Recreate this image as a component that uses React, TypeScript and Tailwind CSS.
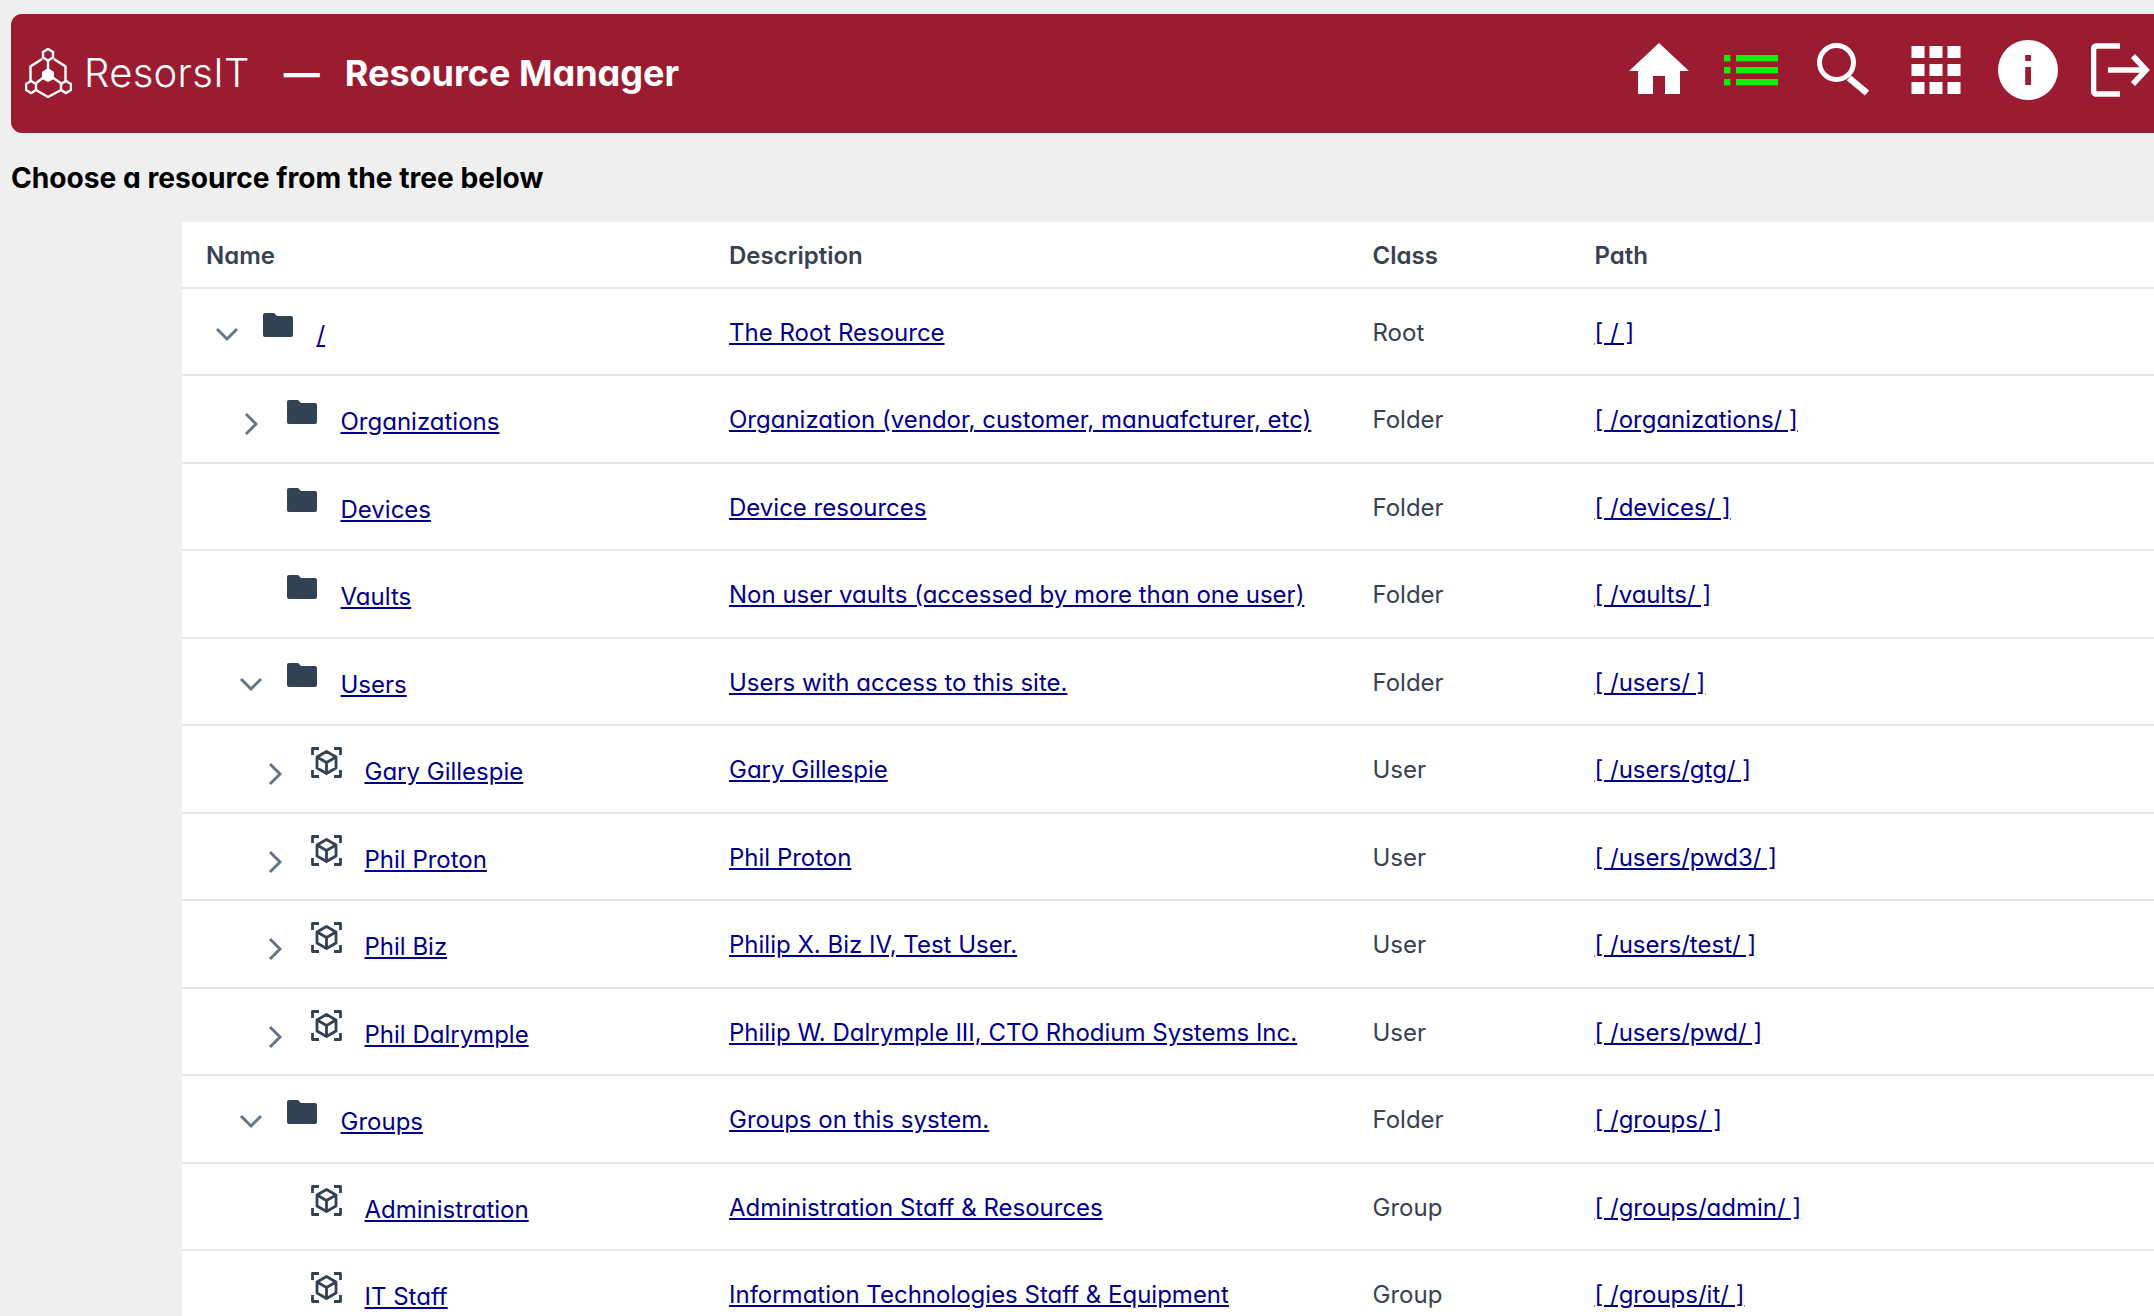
import React from "react";

type Row = {
  name: string;
  desc: string;
  cls: string;
  path: string;
  depth: 0 | 1 | 2;
  chevron: "down" | "right" | "none";
  icon: "folder" | "cube";
};

const rows: Row[] = [
  { name: "/", desc: "The Root Resource", cls: "Root", path: "[ / ]", depth: 0, chevron: "down", icon: "folder" },
  { name: "Organizations", desc: "Organization (vendor, customer, manuafcturer, etc)", cls: "Folder", path: "[ /organizations/ ]", depth: 1, chevron: "right", icon: "folder" },
  { name: "Devices", desc: "Device resources", cls: "Folder", path: "[ /devices/ ]", depth: 1, chevron: "none", icon: "folder" },
  { name: "Vaults", desc: "Non user vaults (accessed by more than one user)", cls: "Folder", path: "[ /vaults/ ]", depth: 1, chevron: "none", icon: "folder" },
  { name: "Users", desc: "Users with access to this site.", cls: "Folder", path: "[ /users/ ]", depth: 1, chevron: "down", icon: "folder" },
  { name: "Gary Gillespie", desc: "Gary Gillespie", cls: "User", path: "[ /users/gtg/ ]", depth: 2, chevron: "right", icon: "cube" },
  { name: "Phil Proton", desc: "Phil Proton", cls: "User", path: "[ /users/pwd3/ ]", depth: 2, chevron: "right", icon: "cube" },
  { name: "Phil Biz", desc: "Philip X. Biz IV, Test User.", cls: "User", path: "[ /users/test/ ]", depth: 2, chevron: "right", icon: "cube" },
  { name: "Phil Dalrymple", desc: "Philip W. Dalrymple III, CTO Rhodium Systems Inc.", cls: "User", path: "[ /users/pwd/ ]", depth: 2, chevron: "right", icon: "cube" },
  { name: "Groups", desc: "Groups on this system.", cls: "Folder", path: "[ /groups/ ]", depth: 1, chevron: "down", icon: "folder" },
  { name: "Administration", desc: "Administration Staff & Resources", cls: "Group", path: "[ /groups/admin/ ]", depth: 2, chevron: "none", icon: "cube" },
  { name: "IT Staff", desc: "Information Technologies Staff & Equipment", cls: "Group", path: "[ /groups/it/ ]", depth: 2, chevron: "none", icon: "cube" },
];

const depthClass = ["pl-[33px]", "pl-[57px]", "pl-[81px]"];

function Logo() {
  return (
    <svg width="47" height="50" viewBox="0 0 47 50" fill="none" stroke="#fff" strokeWidth="2.4" className="shrink-0">
      <path d="M23 1 L28 4 V9.5 L23 12.5 L18 9.5 V4 Z" />
      <path d="M6 33 L11 36 V42 L6 45 L1 42 V36 Z" />
      <path d="M41 33 L46 36 V42 L41 45 L36 42 V36 Z" />
      <path d="M23 20 L29 24 V31 L23 34 L17 31 V24 Z" fill="#fff" stroke="none" />
      <path d="M23 12.5 V22 M19 29 L10 36 M27 29 L37 36" />
      <path d="M17 11 L5.5 18.5 V33 M29 11 L40.5 18.5 V33 M11 42 L23 49 L36 42" />
    </svg>
  );
}

function HomeIcon() {
  return (
    <svg width="60" height="60" viewBox="0 0 60 60" fill="#fff">
      <path d="M30 3 L60 31 H51 V54 H36 V36 H24 V54 H9 V31 H0 Z" />
    </svg>
  );
}

function ListIcon() {
  return (
    <svg width="60" height="60" viewBox="0 0 60 60" fill="#0cf00c">
      <rect x="3" y="15" width="6.4" height="6.4" />
      <rect x="15" y="15" width="42" height="6.4" />
      <rect x="3" y="27" width="6.4" height="6.4" />
      <rect x="15" y="27" width="42" height="6.4" />
      <rect x="3" y="39" width="6.4" height="6.4" />
      <rect x="15" y="39" width="42" height="6.4" />
    </svg>
  );
}

function SearchIcon() {
  return (
    <svg width="60" height="60" viewBox="0 0 60 60" fill="none" stroke="#fff">
      <circle cx="22.5" cy="22.5" r="17" strokeWidth="5" />
      <path d="M35 38 L53 53" strokeWidth="6.5" />
    </svg>
  );
}

function GridIcon() {
  const pos = [0, 18, 36];
  return (
    <svg width="60" height="60" viewBox="0 0 60 60" fill="#fff">
      {pos.map((y) =>
        pos.map((x) => <rect key={`${x}-${y}`} x={x + 5.5} y={y + 6} width="13" height="12" />)
      )}
    </svg>
  );
}

function InfoIcon() {
  return (
    <svg width="60" height="60" viewBox="0 0 60 60" fill="#fff">
      <path
        fillRule="evenodd"
        d="M30 0 A30 30 0 1 1 30 60 A30 30 0 1 1 30 0 Z M27.2 15 V21 H33 V15 Z M27.2 27 V45 H33 V27 Z"
      />
    </svg>
  );
}

function LogoutIcon() {
  return (
    <svg width="60" height="60" viewBox="0 0 60 60" fill="none" stroke="#fff" strokeWidth="5.6">
      <path d="M29 6 H6 Q2.5 6 2.5 10 V50 Q2.5 54 6 54 H29" />
      <path d="M17 30 H55" />
      <path d="M42 16 L55 30 L42 44" />
    </svg>
  );
}

function Chevron({ dir }: { dir: "down" | "right" | "none" }) {
  if (dir === "none") return <span className="w-[24px] h-[24px] shrink-0" />;
  return (
    <svg
      width="24"
      height="24"
      viewBox="0 0 24 24"
      fill="none"
      stroke="#64748b"
      strokeWidth="2.9"
      className={dir === "down" ? "shrink-0 mt-[34px]" : "shrink-0 mt-[36px]"}
    >
      {dir === "down" ? <path d="M2 6 L12 16 L22 6" /> : <path d="M7 2 L17 12 L7 22" />}
    </svg>
  );
}

function FolderIcon() {
  return (
    <svg width="30" height="24" viewBox="0 0 30 24" fill="#334155" className="shrink-0 mt-[24px]">
      <path d="M2 0 H11 L14 3 H28 Q30 3 30 5 V22 Q30 24 28 24 H2 Q0 24 0 22 V2 Q0 0 2 0 Z" />
    </svg>
  );
}

function CubeIcon() {
  return (
    <svg
      width="31"
      height="31"
      viewBox="0 0 31 31"
      fill="none"
      stroke="#334155"
      strokeWidth="2.8"
      strokeLinejoin="round"
      className="shrink-0 mt-[21px]"
    >
      <path d="M1.5 8 V1.5 H8 M23 1.5 H29.5 V8 M29.5 23 V29.5 H23 M8 29.5 H1.5 V23" />
      <path d="M15.5 4.5 L25 10 V21 L15.5 26.5 L6 21 V10 Z" />
      <path d="M6 10 L15.5 15.5 L25 10 M15.5 15.5 V26.5" />
    </svg>
  );
}

const linkClass = "text-[#00008b] underline";

export default function App() {
  return (
    <div className="w-[2154px] h-[1316px] overflow-hidden bg-[#efefef] font-['Inter',sans-serif] [font-feature-settings:'cv11'] text-[24px]">
      <div className="h-[14px]" />
      <header className="ml-[11px] w-[2156px] h-[119px] rounded-[11px] bg-[#9b1c31] flex items-center text-white">
        <div className="flex items-center pl-[14px] pb-[2px]">
          <Logo />
          <span className="ml-[12px] text-[40px] font-light leading-none tracking-[0.3px]">ResorsIT</span>
          <span className="ml-[34px] text-[36px] font-bold leading-none">—</span>
          <span className="ml-[25px] text-[36px] font-bold leading-none">Resource Manager</span>
        </div>
        <div className="ml-auto flex items-center pb-[7px]">
          {[HomeIcon, ListIcon, SearchIcon, GridIcon, InfoIcon, LogoutIcon].map((Icon, i) => (
            <div key={i} className="w-[92.4px] flex justify-center">
              <Icon />
            </div>
          ))}
        </div>
      </header>
      <h1 className="ml-[11px] mt-[25px] text-[28.15px] leading-[40px] font-bold text-black">Choose a resource from the tree below</h1>
      <div className="ml-[182px] mt-[24px] w-[2100px] bg-white">
        <div className="flex h-[66.5px] items-center pt-[3px] font-semibold text-[#374151] border-b-2 border-[#e5e7eb]">
          <div className="w-[523px] pl-[24px] shrink-0">Name</div>
          <div className="w-[643.5px] pl-[24px] shrink-0">Description</div>
          <div className="w-[222px] pl-[24px] shrink-0">Class</div>
          <div className="pl-[24px]">Path</div>
        </div>
        {rows.map((r) => (
          <div key={r.path} className="flex h-[87.5px] border-b-2 border-[#e5e7eb]">
            <div className={`w-[523px] shrink-0 flex items-start ${depthClass[r.depth]}`}>
              <Chevron dir={r.chevron} />
              <span className="ml-[24px] w-[30px] shrink-0 flex">{r.icon === "folder" ? <FolderIcon /> : <CubeIcon />}</span>
              <a className={`ml-[23.5px] mt-[28px] ${linkClass}`}>{r.name}</a>
            </div>
            <div className="w-[643.5px] pl-[24px] pt-[3px] shrink-0 flex items-center">
              <a className={linkClass}>{r.desc}</a>
            </div>
            <div className="w-[222px] pl-[24px] pt-[3px] shrink-0 flex items-center text-[#374151]">{r.cls}</div>
            <div className="pl-[24px] pt-[3px] flex items-center">
              <a className={linkClass}>{r.path}</a>
            </div>
          </div>
        ))}
      </div>
    </div>
  );
}
